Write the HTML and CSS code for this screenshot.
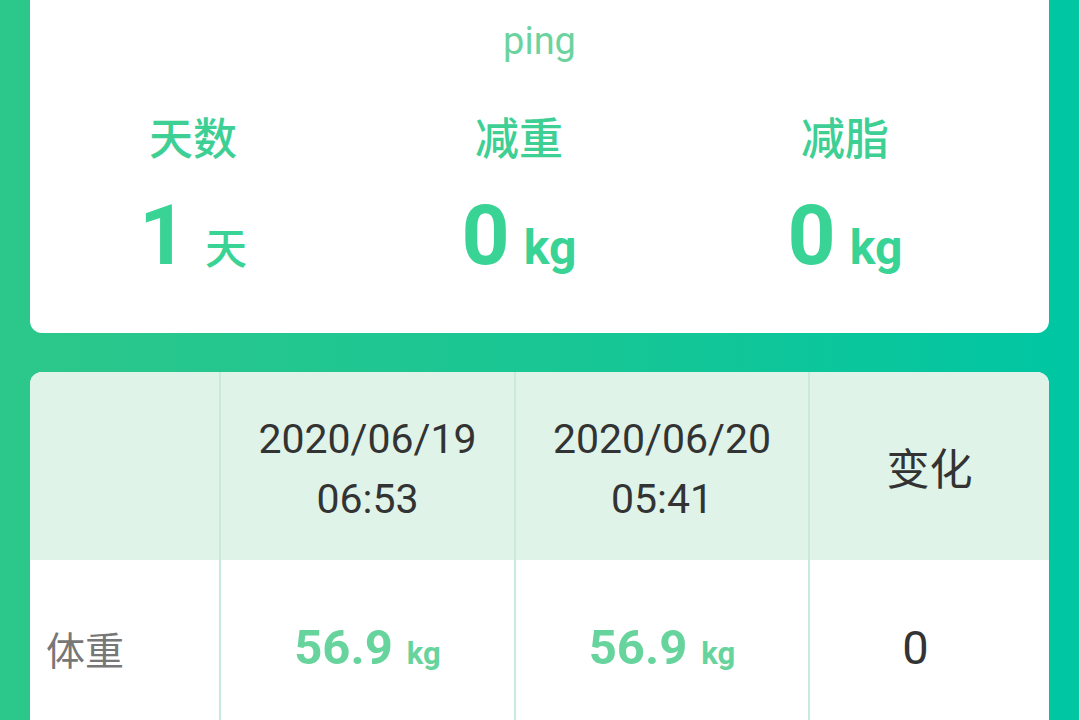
FILE: index.html
```html
<!DOCTYPE html>
<html lang="zh-CN">
<head>
<meta charset="utf-8">
<link rel="stylesheet" href="styles.css">
</head>
<body>
<div class="page">
  <section class="summary">
    <div class="name">ping</div>
    <div class="stats">
      <div class="stat">
        <div class="stat-label">天数</div>
        <div class="stat-value"><span class="num">1</span><span class="unit unit-cjk">天</span></div>
      </div>
      <div class="stat">
        <div class="stat-label">减重</div>
        <div class="stat-value"><span class="num">0</span><span class="unit">kg</span></div>
      </div>
      <div class="stat">
        <div class="stat-label">减脂</div>
        <div class="stat-value"><span class="num">0</span><span class="unit">kg</span></div>
      </div>
    </div>
  </section>

  <section class="table">
    <div class="row head">
      <div class="cell first"></div>
      <div class="cell date">2020/06/19<br>06:53</div>
      <div class="cell date">2020/06/20<br>05:41</div>
      <div class="cell cjk">变化</div>
    </div>
    <div class="row body">
      <div class="cell first label">体重</div>
      <div class="cell"><span class="w">56.9</span><span class="wu">kg</span></div>
      <div class="cell"><span class="w">56.9</span><span class="wu">kg</span></div>
      <div class="cell delta">0</div>
    </div>
  </section>
</div>
</body>
</html>
```

FILE: styles.css
```css
html, body {
  margin: 0;
  padding: 0;
}
body {
  width: 1079px;
  height: 720px;
  overflow: hidden;
  background: linear-gradient(90deg, #2dc78a 0%, #17c695 55%, #00c6a3 100%);
  font-family: Roboto, "Noto Sans CJK SC", sans-serif;
}
.page {
  padding: 0 30px;
  display: flex;
  flex-direction: column;
  gap: 39px;
}
.summary {
  background: #fff;
  border-radius: 0 0 12px 12px;
  height: 333px;
  box-sizing: border-box;
  padding-top: 18px;
}
.name {
  text-align: center;
  color: #6cd3a0;
  font-size: 38px;
  line-height: 46px;
}
.stats {
  display: grid;
  grid-template-columns: 326px 326px 326px;
  margin-top: 45px;
}
.stat {
  display: flex;
  flex-direction: column;
  align-items: center;
}
.stat-label {
  font-family: "Noto Sans CJK SC", sans-serif;
  font-size: 44px;
  line-height: 54px;
  color: #3ecf95;
  font-weight: 500;
}
.stat-value {
  display: flex;
  align-items: baseline;
  color: #3ad396;
  margin-top: 25px;
  line-height: 96px;
}
.num {
  font-size: 84px;
  font-weight: 700;
}
.unit {
  font-size: 48px;
  font-weight: 700;
  margin-left: 14px;
}
.unit-cjk {
  font-family: "Noto Sans CJK SC", sans-serif;
  font-size: 42px;
  font-weight: 500;
  margin-left: 18px;
}
.table {
  background: #fff;
  border-radius: 12px 12px 0 0;
  overflow: hidden;
}
.row {
  display: grid;
  grid-template-columns: 189px 295px 294px 1fr;
}
.head {
  background: #dff3e9;
  height: 188px;
}
.body {
  height: 176px;
}
.cell {
  border-left: 2px solid #c8eadb;
  display: flex;
  align-items: center;
  justify-content: center;
  text-align: center;
  color: #333;
  font-size: 41px;
  line-height: 60px;
}
.cell.first {
  border-left: none;
}
.date {
  padding-top: 6px;
}
.cjk {
  font-family: "Noto Sans CJK SC", sans-serif;
  font-size: 43px;
}
.label {
  justify-content: flex-start;
  padding-left: 16px;
  font-family: "Noto Sans CJK SC", sans-serif;
  font-size: 39px;
  color: #777;
}
.w {
  color: #66d49c;
  font-weight: 700;
  font-size: 49px;
}
.wu {
  color: #66d49c;
  font-weight: 700;
  font-size: 31px;
  margin-left: 14px;
  position: relative;
  top: 6px;
}
.delta {
  font-size: 47px;
  padding-right: 28px;
}
```
